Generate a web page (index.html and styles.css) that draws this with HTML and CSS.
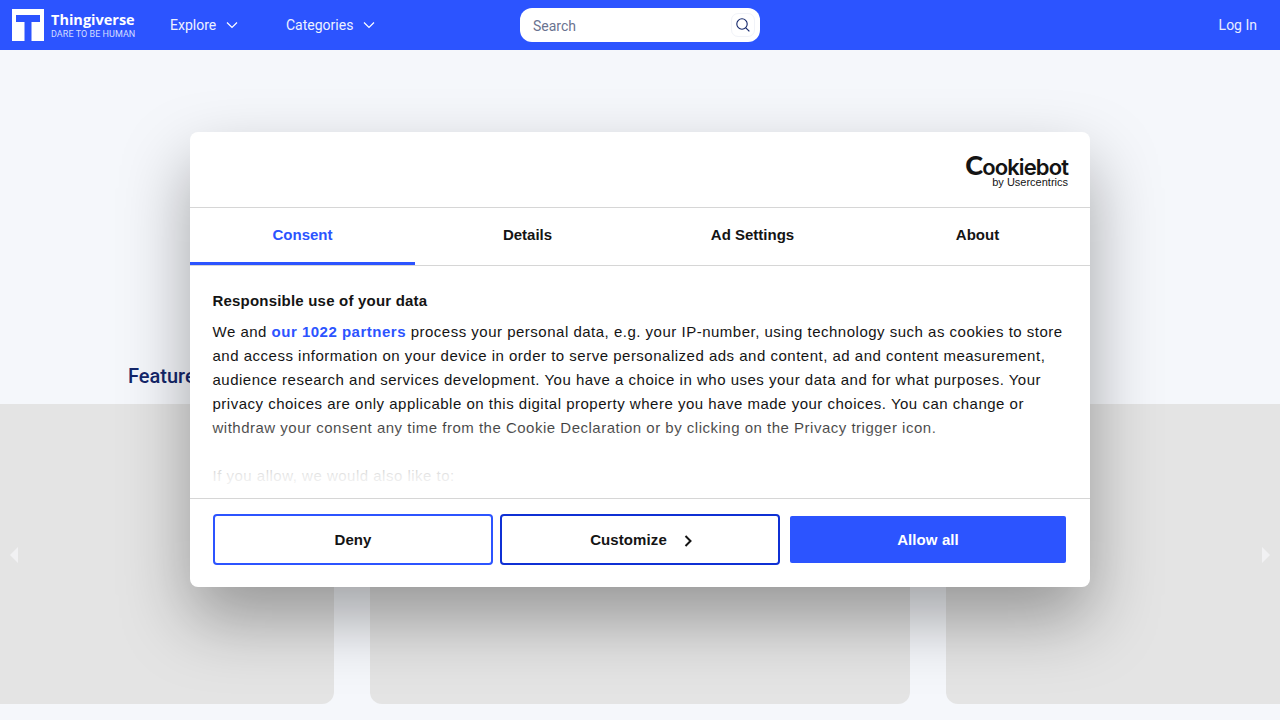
FILE: index.html
```html
<!DOCTYPE html>
<html lang="en">
<head>
    <meta charset="UTF-8">
    <title>Thingiverse</title>
    <link rel="stylesheet" href="styles.css">
</head>
<body>
    <header class="topbar">
        <a class="brand" href="#">
            <svg class="brand-mark" viewBox="0 0 32 32" width="32" height="32">
                <rect width="32" height="32" fill="#fff"/>
                <path d="M4 6h24v7h-8.500v19h-7V13H4z" fill="#2c54ff"/>
            </svg>
            <span class="brand-text">
                <span class="brand-name">Thingiverse</span>
                <span class="brand-tag">DARE TO BE HUMAN</span>
            </span>
        </a>
        <a class="nav-link nav-explore" href="#">Explore
            <svg class="chevron" viewBox="0 0 12 8" width="12" height="8"><path d="M1 1.500l5 5 5-5" fill="none" stroke="#fff" stroke-width="1.200"/></svg>
        </a>
        <a class="nav-link nav-categories" href="#">Categories
            <svg class="chevron" viewBox="0 0 12 8" width="12" height="8"><path d="M1 1.500l5 5 5-5" fill="none" stroke="#fff" stroke-width="1.200"/></svg>
        </a>
        <div class="search">
            <span class="search-text">Search</span>
            <span class="search-btn">
                <svg viewBox="0 0 16 16" width="16" height="16"><circle cx="7" cy="7" r="5.200" fill="none" stroke="#14276b" stroke-width="1.100"/><path d="M10.800 10.800l3.600 3.600" stroke="#14276b" stroke-width="1.200"/></svg>
            </span>
        </div>
        <a class="login" href="#">Log In</a>
    </header>

    <main class="content">
        <h2 class="section-title">Featured Things</h2>
        <div class="slider">
            <div class="slide"></div>
            <div class="slide"></div>
            <div class="slide"></div>
            <span class="arrow arrow-left"></span>
            <span class="arrow arrow-right"></span>
        </div>
    </main>

    <div class="dialog">
        <div class="dialog-head">
            <div class="cb-logo">
                <span class="cb-name"><span class="cb-initial">C</span>ookiebot</span>
                <span class="cb-sub">by Usercentrics</span>
            </div>
        </div>
        <nav class="tabs">
            <a class="tab active" href="#">Consent</a>
            <a class="tab" href="#">Details</a>
            <a class="tab" href="#">Ad Settings</a>
            <a class="tab" href="#">About</a>
        </nav>
        <div class="dialog-body">
            <h3>Responsible use of your data</h3>
            <p>We and <a href="#">our 1022 partners</a> process your personal data, e.g. your IP-number, using technology such as cookies to store and access information on your device in order to serve personalized ads and content, ad and content measurement, audience research and services development. You have a choice in who uses your data and for what purposes. Your privacy choices are only applicable on this digital property where you have made your choices. You can change or withdraw your consent any time from the Cookie Declaration or by clicking on the Privacy trigger icon.</p>
            <p class="also">If you allow, we would also like to:</p>
            <div class="fade"></div>
        </div>
        <div class="dialog-foot">
            <button class="btn btn-deny">Deny</button>
            <button class="btn btn-custom">Customize
                <svg viewBox="0 0 8 12" width="8" height="12"><path d="M1.500 1l5 5-5 5" fill="none" stroke="#141414" stroke-width="2"/></svg>
            </button>
            <button class="btn btn-allow">Allow all</button>
        </div>
    </div>
</body>
</html>
```

FILE: styles.css
```css
* {
    box-sizing: border-box;
}
html, body {
    height: 100%;
}
body {
    margin: 0;
    height: 720px;
    overflow: hidden;
    background: #f5f7fb;
    font-family: "Liberation Sans", Arial, sans-serif;
}
a {
    text-decoration: none;
    color: inherit;
}

/* top bar */
.topbar {
    display: flex;
    align-items: center;
    height: 50px;
    padding-left: 12px;
    background: #2c54ff;
    color: #fff;
    font-family: Roboto, sans-serif;
    font-size: 14px;
}
.brand {
    display: flex;
    align-items: center;
    gap: 7px;
    width: 158px;
}
.brand-mark {
    display: block;
    flex: none;
}
.brand-text {
    display: flex;
    flex-direction: column;
}
.brand-name {
    font-family: "Open Sans", sans-serif;
    font-weight: 700;
    font-size: 14.500px;
    line-height: 18px;
}
.brand-tag {
    font-size: 9px;
    line-height: 11px;
    letter-spacing: .05px;
    color: #d5ddff;
}
.nav-link {
    display: flex;
    align-items: center;
    color: #eef1ff;
}
.nav-explore {
    width: 116px;
}
.nav-categories {
    width: 234px;
}
.chevron {
    margin-left: 10px;
}
.search {
    display: flex;
    align-items: center;
    justify-content: space-between;
    width: 240px;
    height: 34px;
    padding: 0 5px 0 13px;
    background: #fff;
    border-radius: 12px;
}
.search-text {
    padding-top: 2px;
    color: #6a7390;
    font-size: 14px;
}
.search-btn {
    display: flex;
    align-items: center;
    justify-content: center;
    width: 24px;
    height: 24px;
    border: 1px solid #f1f3f8;
    border-radius: 7px;
}
.login {
    margin-left: auto;
    margin-right: 23px;
    color: #e8ecff;
}

/* page behind the dialog */
.content {
    padding-top: 312px;
}
.section-title {
    margin: 0 0 14px 128px;
    font-family: Roboto, sans-serif;
    font-size: 20px;
    font-weight: 500;
    line-height: 28px;
    color: #14276b;
}
.slider {
    position: relative;
    display: flex;
    gap: 36px;
    height: 300px;
    margin-left: -206px;
}
.slide {
    flex: none;
    width: 540px;
    background: #e4e4e4;
    border-radius: 12px;
}
.arrow {
    position: absolute;
    top: 143px;
    border-top: 8px solid transparent;
    border-bottom: 8px solid transparent;
}
.arrow-left {
    left: 216px;
    border-right: 8px solid #f1f1f3;
}
.arrow-right {
    left: 1468px;
    border-left: 8px solid #f1f1f3;
}

/* consent dialog */
.dialog {
    position: absolute;
    left: 190px;
    top: 132px;
    width: 900px;
    height: 455px;
    background: #fff;
    border-radius: 8px;
    box-shadow: 0 32px 68px rgba(0, 0, 0, .34);
    color: #141414;
}
.dialog-head {
    display: flex;
    justify-content: flex-end;
    height: 76px;
    padding: 23px 22px 0 0;
    border-bottom: 1px solid #d6d6d6;
}
.cb-logo {
    display: flex;
    flex-direction: column;
    align-items: flex-end;
}
.cb-name {
    font-family: Inter, sans-serif;
    font-weight: 600;
    font-size: 22px;
    line-height: 19px;
    letter-spacing: -.9px;
}
.cb-initial {
    font-family: Lato, sans-serif;
    font-size: 27px;
    font-weight: 900;
}
.cb-sub {
    font-size: 11px;
    line-height: 11px;
}
.tabs {
    display: flex;
    height: 58px;
    border-bottom: 1px solid #d6d6d6;
}
.tab {
    flex: 1;
    display: flex;
    align-items: center;
    justify-content: center;
    padding-bottom: 5px;
    font-size: 15px;
    font-weight: 700;
}
.tab.active {
    padding-bottom: 2px;
    color: #2c54ff;
    border-bottom: 3px solid #2c54ff;
}
.dialog-body {
    position: relative;
    height: 233px;
    padding: 25px 23px 0 22.500px;
    overflow: hidden;
    border-bottom: 1px solid #d6d6d6;
}
.dialog-body h3 {
    margin: 0 0 9px;
    font-size: 15px;
    font-weight: 700;
    line-height: 20px;
    letter-spacing: .2px;
}
.dialog-body p {
    margin: 0 0 24px;
    font-size: 15px;
    line-height: 24px;
    letter-spacing: .5px;
}
.dialog-body p a {
    color: #2c54ff;
    font-weight: 700;
}
.fade {
    position: absolute;
    left: 0;
    right: 0;
    bottom: 0;
    height: 90px;
    background: linear-gradient(rgba(255, 255, 255, 0), rgba(255, 255, 255, .25) 25%, rgba(255, 255, 255, .9) 75%, #fff);
}
.dialog-foot {
    display: flex;
    align-items: center;
    gap: 7px;
    padding: 15px 24px 0 23px;
}
.btn {
    display: flex;
    align-items: center;
    justify-content: center;
    width: 280px;
    height: 51px;
    background: #fff;
    border: 2px solid #2c54ff;
    border-radius: 4px;
    color: #141414;
    font-family: "Liberation Sans", Arial, sans-serif;
    font-size: 15px;
    font-weight: 700;
    letter-spacing: .1px;
}
.btn-custom {
    gap: 17px;
    padding-left: 8px;
    border-color: #0f30d4;
}
.btn-custom svg {
    margin-top: 2px;
}
.btn-allow {
    width: 276px;
    height: 47px;
    margin-left: 3px;
    background: #2c54ff;
    border: 0;
    border-radius: 2px;
    color: #fff;
}
```
